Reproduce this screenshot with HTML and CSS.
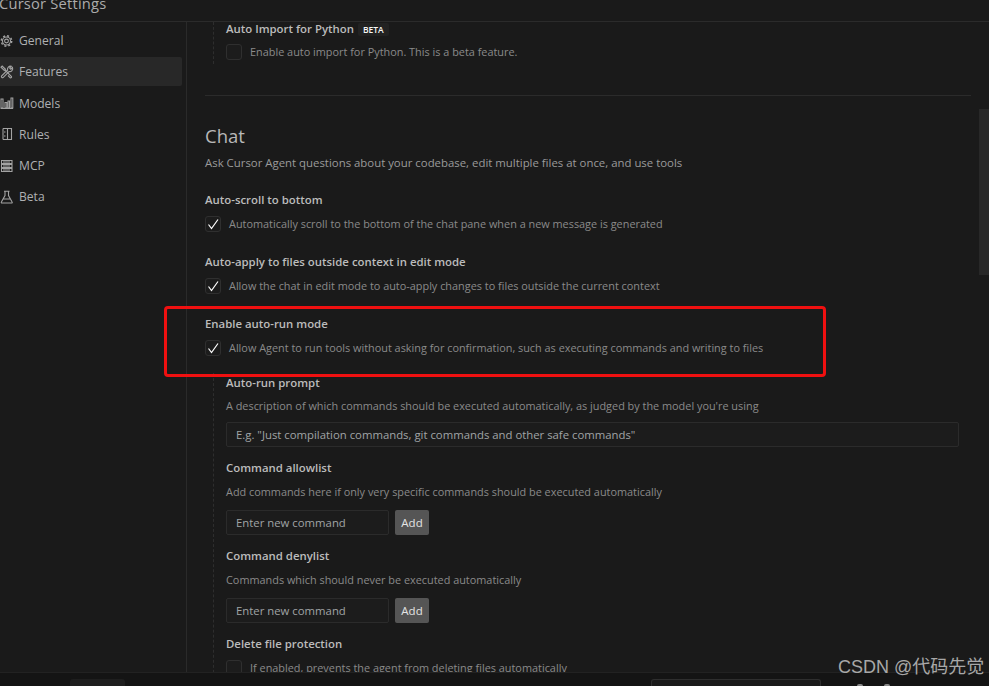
FILE: index.html
```html
<!DOCTYPE html>
<html lang="en">
<head>
<meta charset="utf-8">
<title>Cursor Settings</title>
<link rel="stylesheet" href="styles.css">
</head>
<body>
<div class="app">
  <header class="topbar"><span class="topbar-title">Cursor Settings</span></header>
  <div class="main">
    <nav class="sidebar">
      <a class="nav-item">
        <svg class="nav-icon" viewBox="0 0 14 14"><circle cx="6.500" cy="7" r="1.900"/><circle cx="6.500" cy="7" r="4"/><circle class="gear-teeth" cx="6.500" cy="7" r="5.200"/></svg>
        <span>General</span>
      </a>
      <a class="nav-item is-active">
        <svg class="nav-icon" viewBox="0 0 14 14"><path d="M1 2.200 2.200 1l3.300 3.300-1.200 1.200zM5 5l6.500 6.500a1 1 0 0 1-1.300 1.300L8 10.500"/><path d="M12.500 2.500 10.800 4.200 9.600 3 11.300 1.300a3 3 0 0 0-3.700 3.700L1.500 11a1.200 1.200 0 0 0 1.600 1.600L9 6.500a3 3 0 0 0 3.500-4z"/></svg>
        <span>Features</span>
      </a>
      <a class="nav-item">
        <svg class="nav-icon" viewBox="0 0 14 14"><path d="M.5 12.500h12.500M1 12V3h2v9zM5 12V6.500h1.800V12zM8 12V5h1.500v7zM11 12V2h1.800v10z"/></svg>
        <span>Models</span>
      </a>
      <a class="nav-item">
        <svg class="nav-icon" viewBox="0 0 14 14"><path d="M3 1.500h8.500v11H3M3 1.500v2.500M3 6v2M3 10v2.500M2 5h3.500M2 9h3.500M7.500 1.500v11"/></svg>
        <span>Rules</span>
      </a>
      <a class="nav-item">
        <svg class="nav-icon" viewBox="0 0 14 14"><path d="M1.500 1.500h10.500v3H1.500zM1.500 5.500h10.500v3H1.500zM1.500 9.500h10.500v3H1.500zM3 3h7M3 7h7M3 11h7"/></svg>
        <span>MCP</span>
      </a>
      <a class="nav-item">
        <svg class="nav-icon" viewBox="0 0 14 14"><path d="M4 1.200h5.500M5 1.200v4.300L1.400 12a.6.6 0 0 0 .5 1h9.700a.6.6 0 0 0 .5-1L8.500 5.500V1.200M3.300 9h6.900"/></svg>
        <span>Beta</span>
      </a>
    </nav>

    <main class="content">
      <div class="sub sub-first">
        <div class="setting">
          <div class="setting-title first-title">Auto Import for Python <span class="badge">BETA</span></div>
          <label class="setting-row first-row"><span class="check"></span><span class="desc">Enable auto import for Python. This is a beta feature.</span></label>
        </div>
      </div>

      <hr class="divider">

      <h2 class="section-title">Chat</h2>
      <p class="section-sub">Ask Cursor Agent questions about your codebase, edit multiple files at once, and use tools</p>

      <div class="settings">
        <div class="setting">
          <div class="setting-title">Auto-scroll to bottom</div>
          <label class="setting-row"><span class="check"><svg viewBox="0 0 14 14"><path d="M2.500 7.500 5.500 11.500 12 2.500"/></svg></span><span class="desc">Automatically scroll to the bottom of the chat pane when a new message is generated</span></label>
        </div>
        <div class="setting">
          <div class="setting-title">Auto-apply to files outside context in edit mode</div>
          <label class="setting-row"><span class="check"><svg viewBox="0 0 14 14"><path d="M2.500 7.500 5.500 11.500 12 2.500"/></svg></span><span class="desc">Allow the chat in edit mode to auto-apply changes to files outside the current context</span></label>
        </div>
        <div class="setting">
          <div class="setting-title">Enable auto-run mode</div>
          <label class="setting-row"><span class="check"><svg viewBox="0 0 14 14"><path d="M2.500 7.500 5.500 11.500 12 2.500"/></svg></span><span class="desc">Allow Agent to run tools without asking for confirmation, such as executing commands and writing to files</span></label>
        </div>
      </div>

      <div class="sub sub-run">
        <div class="setting">
          <div class="setting-title">Auto-run prompt</div>
          <div class="desc desc-line desc-tight">A description of which commands should be executed automatically, as judged by the model you're using</div>
          <div class="field field-wide">E.g. "Just compilation commands, git commands and other safe commands"</div>
        </div>
        <div class="setting">
          <div class="setting-title">Command allowlist</div>
          <div class="desc desc-line">Add commands here if only very specific commands should be executed automatically</div>
          <div class="field-row"><div class="field field-small">Enter new command</div><button class="add-btn">Add</button></div>
        </div>
        <div class="setting">
          <div class="setting-title">Command denylist</div>
          <div class="desc desc-line">Commands which should never be executed automatically</div>
          <div class="field-row"><div class="field field-small">Enter new command</div><button class="add-btn">Add</button></div>
        </div>
        <div class="setting">
          <div class="setting-title">Delete file protection</div>
          <label class="setting-row"><span class="check"></span><span class="desc">If enabled, prevents the agent from deleting files automatically</span></label>
        </div>
      </div>
    </main>
    <div class="scroll-thumb"></div>
  </div>
  <footer class="statusbar">
    <span class="status-tab"></span>
    <span class="status-field"></span>
    <span class="status-dot status-dot-first"></span>
    <span class="status-dot"></span>
  </footer>
  <div class="highlight"></div>
  <div class="watermark">CSDN @代码先觉</div>
</div>
</body>
</html>
```

FILE: styles.css
```css
* { box-sizing: border-box; }
html, body { margin: 0; height: 100%; }
body {
  background: #1a1a1a;
  font-family: "Open Sans", "Noto Sans", sans-serif;
  color: #b4b4b4;
  overflow: hidden;
}
.app {
  position: relative;
  width: 989px;
  height: 686px;
  display: flex;
  flex-direction: column;
  overflow: hidden;
}
.topbar {
  flex: 0 0 22px;
  display: flex;
  align-items: flex-end;
  border-bottom: 1px solid #2b2b2b;
  overflow: hidden;
  padding-bottom: 8px;
}
.topbar-title {
  margin-left: -1px;
  font-size: 14.700px;
  line-height: 20px;
  letter-spacing: .2px;
  color: #ababab;
}
.main {
  flex: 1;
  min-height: 0;
  display: flex;
  position: relative;
}
.sidebar {
  flex: 0 0 187px;
  border-right: 1px solid #2a2a2a;
  padding: 4px 4px 0 0;
  display: flex;
  flex-direction: column;
  gap: 2.250px;
}
.nav-item {
  height: 29px;
  display: flex;
  align-items: center;
  gap: 5px;
  font-size: 12.100px;
  color: #aeb0b2;
  border-radius: 0 2px 2px 0;
}
.nav-item.is-active { background: #282828; }
.nav-icon {
  width: 14px;
  height: 14px;
  flex: none;
  fill: none;
  stroke: #a3a3a3;
  stroke-width: 1.100;
}
.gear-teeth {
  stroke-width: 1.500;
  stroke-dasharray: 2 2.080;
}
.content {
  flex: 1;
  min-width: 0;
  padding: 0 18px 0 18px;
  overflow: hidden;
  font-size: 11px;
}
.sub {
  margin-left: 8px;
  padding-left: 12px;
  border-left: 1px dashed #2e2e2e;
  display: flex;
  flex-direction: column;
}
.sub-first { padding-bottom: 4px; }
.sub-run { margin-top: 17px; padding-top: 2px; gap: 13px; height: 320px; }
.setting { display: flex; flex-direction: column; }
.setting-title {
  font-size: 11.400px;
  line-height: 16px;
  font-weight: 600;
  color: #bcbcbc;
  white-space: nowrap;
}
.first-title { margin-top: -1px; display: flex; align-items: center; gap: 4px; }
.badge {
  font-size: 8.500px;
  line-height: 13px;
  padding: 0 5px;
  font-weight: 600;
  color: #f6f6f6;
  background: #222222;
  border-radius: 2px;
}
.setting-row {
  margin-top: 8px;
  height: 16px;
  display: flex;
  align-items: center;
  gap: 8px;
}
.first-row { margin-top: 7px; }
.check {
  width: 16px;
  height: 16px;
  flex: none;
  border: 1px solid #2f2f2f;
  border-radius: 3px;
  background: #1c1c1c;
  display: flex;
}
.check svg {
  width: 14px;
  height: 14px;
  fill: none;
  stroke: #ffffff;
  stroke-width: 1.200;
}
.desc {
  font-size: 10.880px;
  line-height: 16px;
  color: #8a8a8a;
  white-space: nowrap;
}
.desc-line { margin-top: 8px; }
.desc-tight { margin-top: 7px; }
.divider {
  margin: 31px 0 0 0;
  height: 1px;
  width: 766px;
  border: 0;
  background: #2b2b2b;
}
.section-title {
  margin: 28px 0 0;
  font-size: 18.500px;
  line-height: 24px;
  font-weight: 400;
  color: #b8b8b8;
}
.section-sub {
  margin: 7px 0 0;
  font-size: 11.400px;
  line-height: 16px;
  color: #9a9a9a;
  white-space: nowrap;
}
.settings {
  margin-top: 21px;
  display: flex;
  flex-direction: column;
  gap: 22px;
}
.field {
  height: 25px;
  border: 1px solid #2b2b2b;
  border-radius: 2px;
  background: #1c1c1c;
  font-size: 11.350px;
  line-height: 23px;
  padding-left: 9px;
  color: #a0a4a6;
  white-space: nowrap;
}
.field-wide { margin-top: 8px; width: 733px; }
.field-row { margin-top: 10px; display: flex; gap: 6px; }
.field-small { width: 163px; }
.add-btn {
  width: 34px;
  height: 25px;
  padding: 0;
  border: 0;
  border-radius: 2px;
  background: #555555;
  color: #e4e4e4;
  font: 500 11.500px "Open Sans", "Noto Sans", sans-serif;
}
.scroll-thumb {
  position: absolute;
  right: 0;
  top: 87px;
  width: 10px;
  height: 166px;
  background: #282828;
}
.statusbar {
  flex: 0 0 13px;
  background: #141414;
  border-top: 1px solid #222222;
  display: flex;
  align-items: flex-start;
  padding-top: 6px;
}
.status-tab {
  margin-left: 70px;
  width: 55px;
  height: 7px;
  background: #1e1e1e;
  border-radius: 3px 3px 0 0;
}
.status-field {
  margin-left: 526px;
  width: 170px;
  height: 7px;
  background: #1a1a1a;
  border: 1px solid #2e2e2e;
  border-bottom: 0;
  border-radius: 3px 3px 0 0;
}
.status-dot {
  margin-top: 5px;
  margin-left: 21px;
  width: 6px;
  height: 2px;
  background: #888888;
  border-radius: 3px 3px 0 0;
}
.status-dot-first { margin-left: 36px; }
.highlight {
  position: absolute;
  left: 164px;
  top: 306px;
  width: 662px;
  height: 71px;
  border: 3px solid #f01010;
  border-radius: 4px;
  pointer-events: none;
}
.watermark {
  position: absolute;
  left: 838px;
  top: 656px;
  font-family: "Liberation Sans", "Noto Sans CJK SC", sans-serif;
  font-size: 18px;
  line-height: 22px;
  color: #a8a8a8;
  white-space: nowrap;
}
```
